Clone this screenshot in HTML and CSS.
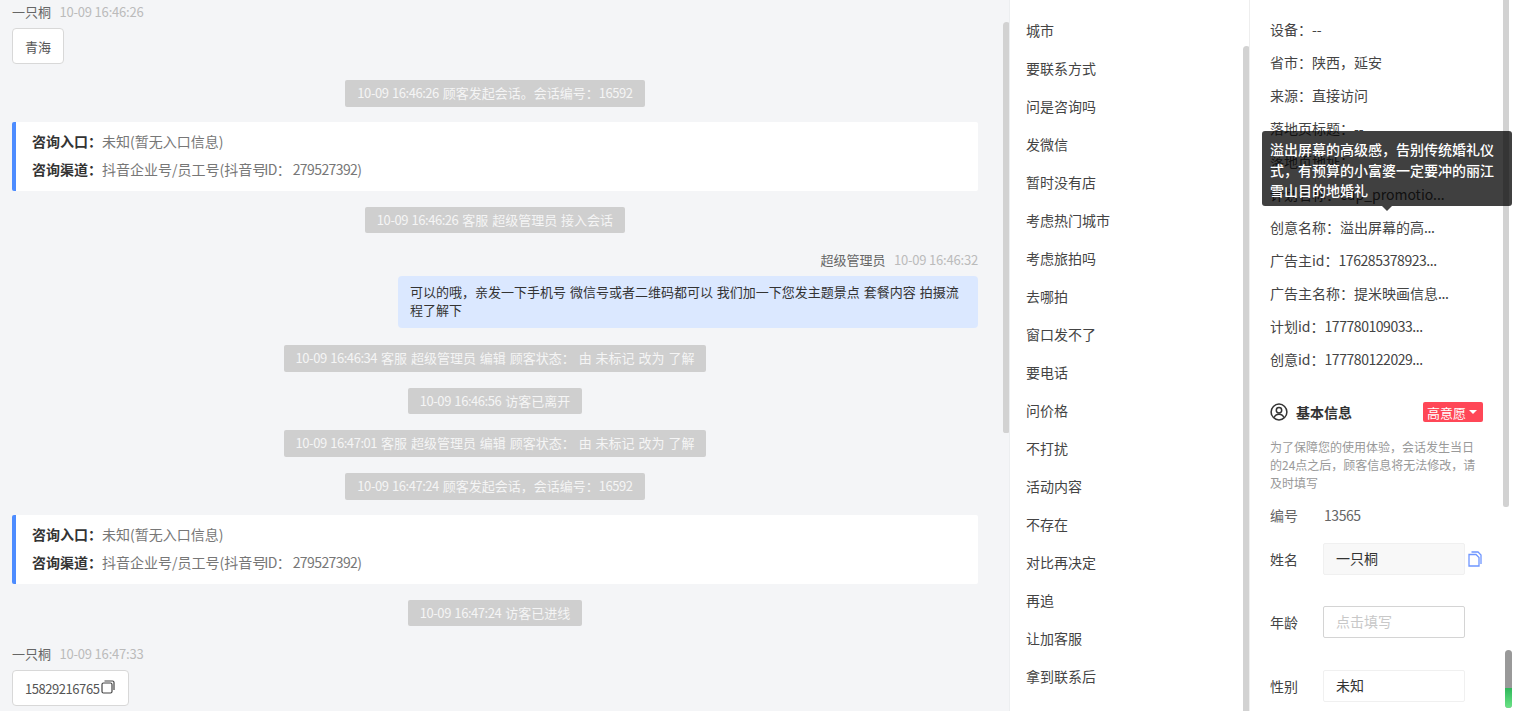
FILE: index.html
```html
<!DOCTYPE html>
<html lang="zh">
<head>
<meta charset="utf-8">
<title>会话详情</title>
<link rel="stylesheet" href="styles.css">
</head>
<body>
<div class="page">
  <main class="chat">
    <div class="meta"><span class="who">一只桐</span><span class="time">10-09 16:46:26</span></div>
    <div class="msg">青海</div>
    <div class="notice"><span class="num">10-09 16:46:26</span> 顾客发起会话。会话编号：<span class="num">16592</span></div>
    <div class="card">
      <p><b>咨询入口：</b>未知(暂无入口信息)</p>
      <p><b>咨询渠道：</b>抖音企业号/员工号(抖音号<span class="id">ID： 279527392)</span></p>
    </div>
    <div class="notice"><span class="num">10-09 16:46:26</span> 客服 超级管理员 接入会话</div>
    <div class="meta right"><span class="who">超级管理员</span><span class="time">10-09 16:46:32</span></div>
    <div class="bubble">可以的哦，亲发一下手机号 微信号或者二维码都可以 我们加一下您发主题景点 套餐内容 拍摄流程了解下</div>
    <div class="notice"><span class="num">10-09 16:46:34</span> 客服 超级管理员 编辑 顾客状态： 由 未标记 改为 了解</div>
    <div class="notice"><span class="num">10-09 16:46:56</span> 访客已离开</div>
    <div class="notice"><span class="num">10-09 16:47:01</span> 客服 超级管理员 编辑 顾客状态： 由 未标记 改为 了解</div>
    <div class="notice"><span class="num">10-09 16:47:24</span> 顾客发起会话，会话编号：<span class="num">16592</span></div>
    <div class="card">
      <p><b>咨询入口：</b>未知(暂无入口信息)</p>
      <p><b>咨询渠道：</b>抖音企业号/员工号(抖音号<span class="id">ID： 279527392)</span></p>
    </div>
    <div class="notice"><span class="num">10-09 16:47:24</span> 访客已进线</div>
    <div class="meta"><span class="who">一只桐</span><span class="time">10-09 16:47:33</span></div>
    <div class="msg"><span class="num">15829216765</span><svg class="copy" viewBox="0 0 14 14" width="14" height="14" fill="none" stroke="#444" stroke-width="1.2"><rect x="1" y="3" width="10" height="10" rx="1.5"/><path d="M3.5 1h8a1.5 1.5 0 0 1 1.5 1.5V10"/></svg></div>
    <div class="thumb thumb-chat"></div>
  </main>

  <section class="tags">
    <div class="tag">城市</div><div class="tag">要联系方式</div><div class="tag">问是咨询吗</div><div class="tag">发微信</div><div class="tag">暂时没有店</div>
    <div class="tag">考虑热门城市</div><div class="tag">考虑旅拍吗</div><div class="tag">去哪拍</div><div class="tag">窗口发不了</div><div class="tag">要电话</div>
    <div class="tag">问价格</div><div class="tag">不打扰</div><div class="tag">活动内容</div><div class="tag">不存在</div><div class="tag">对比再决定</div>
    <div class="tag">再追</div><div class="tag">让加客服</div><div class="tag">拿到联系后</div>
    <div class="thumb thumb-tags"></div>
  </section>

  <aside class="side">
    <ul class="facts">
      <li>设备：--</li><li>省市：陕西，延安</li><li>来源：直接访问</li><li>落地页标题：--</li><li>落地页地址：</li>
      <li>计划名称：cdp_promotio...</li><li>创意名称：溢出屏幕的高<span class="num">...</span></li><li>广告主id：<span class="num">176285378923...</span></li>
      <li>广告主名称：提米映画信息<span class="num">...</span></li><li>计划id：<span class="num">177780109033...</span></li><li>创意id：<span class="num">177780122029...</span></li>
    </ul>
    <div class="head">
      <svg viewBox="0 0 18 18" width="18" height="18" fill="none" stroke="#333" stroke-width="1.5"><circle cx="9" cy="9" r="7.9"/><circle cx="9" cy="7.2" r="2.7"/><path d="M4.2 14.6c.7-2.3 2.6-3.4 4.8-3.4s4.100 1.100 4.800 3.400"/></svg>
      <strong>基本信息</strong>
      <span class="badge">高意愿<i></i></span>
    </div>
    <p class="hint">为了保障您的使用体验，会话发生当日的24点之后，顾客信息将无法修改，请及时填写</p>
    <div class="field plain"><label>编号</label><span class="num">13565</span></div>
    <div class="field"><label>姓名</label><div class="box filled">一只桐</div>
      <svg class="doc" viewBox="0 0 14 16" width="14" height="16" fill="none" stroke="#6f96ff" stroke-width="1.3"><path d="M3.500 1H10l3 3v9"/><path d="M1 3.500h7l3 3V15H1z" fill="#fff"/></svg>
    </div>
    <div class="field"><label>年龄</label><div class="box empty">点击填写</div></div>
    <div class="field"><label>性别</label><div class="box">未知</div></div>
    <div class="thumb thumb-side"></div>
    <div class="mini"><span></span></div>
  </aside>

  <div class="tip">溢出屏幕的高级感，告别传统婚礼仪式，有预算的小富婆一定要冲的丽江雪山目的地婚礼</div>
</div>
</body>
</html>
```
FILE: styles.css
```css
* { box-sizing: border-box; }
html, body { margin: 0; height: 100%; overflow: hidden; }
body { font-family: "Noto Sans CJK SC", "Liberation Sans", sans-serif; font-size: 13px; color: #333; background: #fff; }
.page { position: relative; display: flex; width: 1514px; height: 711px; overflow: hidden; }
.num { letter-spacing: -.45px; }
.id { letter-spacing: -.6px; margin-left: -2px; }

.chat { position: relative; flex: 0 0 1010px; height: 711px; padding: 2px 31px 0 12px; background: #f4f5f7; display: flex; flex-direction: column; align-items: flex-start; overflow: hidden; border-right: 1px solid #eceef0; }
.meta { height: 20px; line-height: 20px; margin-bottom: 6px; color: #666; flex: none; }
.notice + .meta { margin-top: 18px; }
.meta.right { align-self: flex-end; margin-top: 17px; }
.who { margin-right: 8.500px; }
.time { color: #bbb; letter-spacing: -.2px; }
.msg { display: flex; align-items: center; height: 36px; padding: 0 12px; background: #fff; border: 1px solid #d8d8d8; border-radius: 4px; color: #555; flex: none; }
.copy { margin: -2px 1px 0 2px; }
.notice { align-self: center; height: 26.6px; line-height: 26.6px; margin-top: 16px; padding: 0 12px; background: #cfcfcf; border-radius: 2px; color: #f5f5f5; white-space: nowrap; word-spacing: 1px; flex: none; }
.card { align-self: stretch; height: 68.5px; margin-top: 15.5px; padding: 6px 16px; background: #fff; border-left: 4px solid #4d8cff; border-radius: 2px; flex: none; color: #777; font-size: 14px; }
.card p { margin: 0; height: 27.500px; line-height: 27.500px; }
.card b { color: #333; font-weight: 700; }
.bubble { align-self: flex-end; width: 580px; height: 52px; margin-bottom: 1px; padding: 7px 12px; line-height: 18px; background: #dbe8ff; border-radius: 4px; color: #333; word-spacing: 1px; flex: none; }

.tags { position: relative; flex: 0 0 240px; height: 711px; padding-top: 11px; padding-left: 16px; background: #fff; border-right: 1px solid #eee; font-size: 14px; color: #444; overflow: hidden; }
.tag { height: 38px; line-height: 38px; }

.side { position: relative; flex: 1; height: 711px; padding: 0 20px; background: #fff; font-size: 14px; color: #444; overflow: hidden; }
.facts { list-style: none; margin: 0; padding: 13px 0 0; }
.facts li { height: 33px; line-height: 33px; white-space: nowrap; }
.head { display: flex; align-items: center; height: 20px; margin-top: 26px; }
.head strong { margin-left: 8px; color: #333; font-weight: 700; }
.badge { display: flex; align-items: center; height: 20px; margin-left: auto; margin-right: 11px; padding: 0 6px 0 4px; background: #ff4757; border-radius: 2px; color: #fff; font-size: 13px; }
.badge i { width: 0; height: 0; margin-left: 3px; border: 4px solid transparent; border-top-color: #fff; border-bottom: 0; }
.hint { margin: 15.5px 20px 0 0; width: 212px; font-size: 12px; line-height: 18px; color: #999; }
.field { display: flex; align-items: center; height: 32px; margin-bottom: 31.5px; font-size: 14px; }
.field label { width: 54px; flex: none; }
.field.plain { height: 20px; margin: 13px 0 18px; color: #666; }
.box { width: 142px; height: 32px; line-height: 29px; margin-left: -1px; padding: 0 12px; background: #fff; border: 1px solid #f0f0f0; border-radius: 2px; color: #333; }
.box.filled { background: #f8f8f8; }
.box.empty { border-color: #d4d4d4; color: #c8c8c8; }
.doc { margin-left: 3px; }

.thumb { position: absolute; width: 7px; background: #d2d2d2; border-radius: 4px 4px 3px 3px; }
.thumb-chat { left: 1003px; top: 22px; height: 411px; }
.thumb-tags { left: 233px; top: 46px; height: 670px; }
.thumb-side { left: 253px; top: -5px; height: 512px; width: 6px; }
.mini { position: absolute; left: 255px; top: 650px; width: 7px; height: 58px; background: #999; border-radius: 4px; overflow: hidden; }
.mini span { display: block; margin-top: 38px; height: 20px; background: linear-gradient(#2fb65a, #6be486); }

.tip { position: absolute; left: 1262px; top: 131px; width: 250px; height: 75px; padding: 8px 8px 0; background: rgba(0,0,0,.75); border-radius: 3px; color: #fff; font-size: 14px; font-weight: 500; line-height: 20.500px; }
.tip::after { content: ""; position: absolute; left: 120px; top: 75px; border: 5px solid transparent; border-top-color: #404040; border-bottom: 0; }
```
